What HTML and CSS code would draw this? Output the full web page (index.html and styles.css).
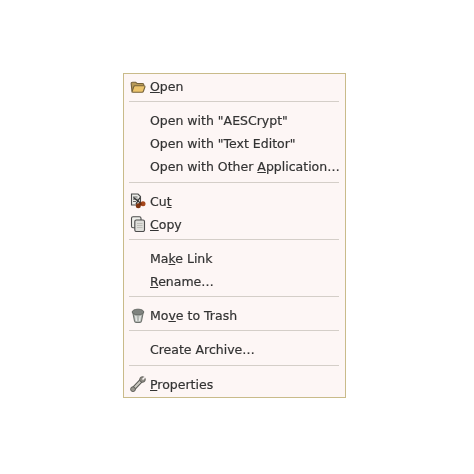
FILE: index.html
```html
<!DOCTYPE html>
<html lang="en">
<head>
<meta charset="utf-8">
<title>Context menu</title>
<link rel="stylesheet" href="styles.css">
</head>
<body>
<div class="menu">
  <div class="item"><span class="icon"><svg viewBox="0 0 16 16" width="16" height="16"><path d="M2 12.500 1.200 5Q1 3.200 2.600 3.200h3L7 4.500h5.500q1.300 0 1.300 1.300v1" fill="#b89a58" stroke="#75623a" stroke-width="1.100"/><path d="M2 12.800 3.800 7.500Q4 6.700 5 6.700h8.800q1.500 0 1.100 1.300l-1.500 4.300q-.3.900-1.300.9H3Q1.800 13.200 2 12.800Z" fill="#ecc46c" stroke="#75623a" stroke-width="1.100"/></svg></span><span><u>O</u>pen</span></div>
  <div class="sep"></div>
  <div class="item"><span class="icon"></span><span>Open with "AESCrypt"</span></div>
  <div class="item"><span class="icon"></span><span>Open with "Text Editor"</span></div>
  <div class="item"><span class="icon"></span><span>Open with Other <u>A</u>pplication…</span></div>
  <div class="sep"></div>
  <div class="item"><span class="icon"><svg viewBox="0 0 16 16" width="16" height="16"><path d="M1.500 1h6.500l2.500 2.500V12h-9Z" fill="#ecece8" stroke="#4c4c4c" stroke-width="1.100"/><path d="M3 4h4.500M3 6.200h5M3 8.500h3" stroke="#666" stroke-width="1"/><path d="M3.500 4.500 11 10.500M10 4.500 6 11" stroke="#333" stroke-width="1.300"/><circle cx="8.300" cy="12.800" r="2.500" fill="#7f3410"/><circle cx="13" cy="10.700" r="2.500" fill="#a5461a"/><path d="M9 11.500 11.500 10.500" stroke="#6e2c0c" stroke-width="2.400"/></svg></span><span>Cu<u>t</u></span></div>
  <div class="item"><span class="icon"><svg viewBox="0 0 16 16" width="16" height="16"><rect x="1.500" y=".8" width="9.500" height="11" rx="1.500" fill="#efefeb" stroke="#4c4c4c" stroke-width="1.100"/><rect x="4.800" y="4" width="9.700" height="11.500" rx="1.500" fill="#dededa" stroke="#4c4c4c" stroke-width="1.100"/><path d="M7 7.500h5.500M7 9.500h5.500M7 11.500h5.500" stroke="#bdbdb8"/></svg></span><span><u>C</u>opy</span></div>
  <div class="sep"></div>
  <div class="item"><span class="icon"></span><span>Ma<u>k</u>e Link</span></div>
  <div class="item"><span class="icon"></span><span><u>R</u>ename…</span></div>
  <div class="sep"></div>
  <div class="item"><span class="icon"><svg viewBox="0 0 16 16" width="16" height="16"><path d="M2.800 4.500 4.500 13q.3 1.500 1.800 1.500h3.400q1.500 0 1.800-1.500l1.700-8.500Z" fill="#b4b8b4" stroke="#6d716d" stroke-width="1.100"/><ellipse cx="8" cy="4" rx="5.800" ry="2.800" fill="#7f837f" stroke="#666a66"/><path d="M5.800 8 6.500 13M10.200 8 9.500 13" stroke="#e8eae8" stroke-width="1.400"/></svg></span><span>Mo<u>v</u>e to Trash</span></div>
  <div class="sep"></div>
  <div class="item"><span class="icon"></span><span>Create Archive…</span></div>
  <div class="sep"></div>
  <div class="item"><span class="icon"><svg viewBox="0 0 16 16" width="16" height="16"><path d="M3.200 13 11.800 4" stroke="#5a5a56" stroke-width="4" stroke-linecap="round"/><path d="M3.200 13 11.800 4" stroke="#c9c7bf" stroke-width="2" stroke-linecap="round"/><circle cx="12.500" cy="3.500" r="2.800" fill="#8f8d86" stroke="#5a5a56" stroke-width=".9"/><circle cx="3" cy="13.200" r="2.400" fill="#9a9890" stroke="#5a5a56" stroke-width=".9"/><path d="M14.800 1.200 12.500 3.500" stroke="#fdf7f6" stroke-width="1.600"/></svg></span><span><u>P</u>roperties</span></div>
</div>
</body>
</html>
```

FILE: styles.css
```css
html, body {
  margin: 0;
  background: #ffffff;
}

body {
  padding: 73px 0 0 123px;
}

.menu {
  box-sizing: border-box;
  width: 223px;
  height: 325px;
  padding: 1px 0;
  background: #fdf6f5;
  border: 1px solid #c9bb8a;
  font-family: "DejaVu Sans", sans-serif;
  font-size: 12.5px;
  color: #333333;
  -webkit-text-stroke: 0.2px #333333;
  filter: blur(0.5px);
}

.item {
  display: flex;
  align-items: center;
  height: 23px;
  padding-left: 6px;
  white-space: nowrap;
}

.icon {
  display: flex;
  width: 16px;
  height: 16px;
  margin-right: 4px;
  flex: none;
}

.sep {
  height: 1px;
  margin: 3.3px 6px 7px 5px;
  background: #d4cec8;
}
```
